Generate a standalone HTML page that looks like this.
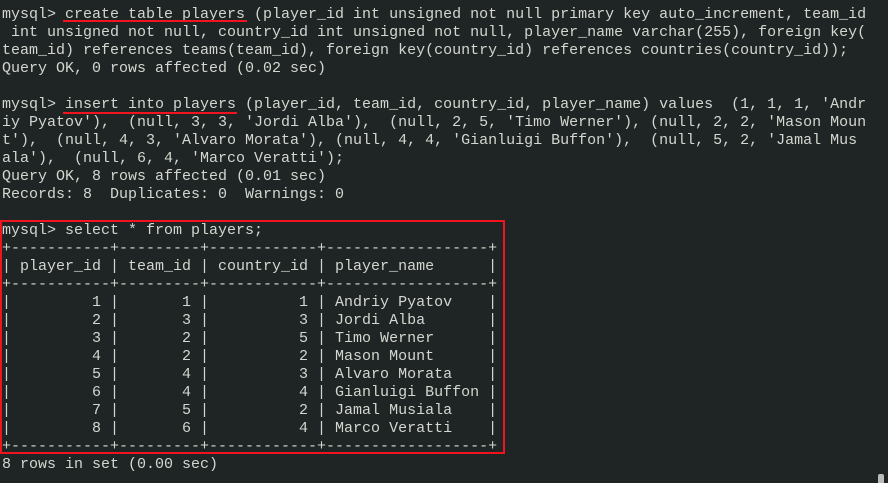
<!DOCTYPE html>
<html><head><meta charset="utf-8"><style>
html,body{margin:0;padding:0;}
body{width:888px;height:483px;background:#1f2425;overflow:hidden;position:relative;}
pre{position:absolute;left:2px;top:6px;margin:0;font-family:"Liberation Mono",monospace;font-size:15px;line-height:18px;color:#d3d7cf;white-space:pre;}
.ul{position:absolute;height:2px;background:#f0141e;}
.box{position:absolute;left:0px;top:220px;width:501px;height:230px;border:2px solid #f0141e;}
.sb{position:absolute;left:878px;top:474px;width:6px;height:9px;background:#bbb;border-radius:2px 2px 0 0;}
</style></head><body>
<pre>mysql&gt; create table players (player_id int unsigned not null primary key auto_increment, team_id
 int unsigned not null, country_id int unsigned not null, player_name varchar(255), foreign key(
team_id) references teams(team_id), foreign key(country_id) references countries(country_id));
Query OK, 0 rows affected (0.02 sec)

mysql&gt; insert into players (player_id, team_id, country_id, player_name) values  (1, 1, 1, 'Andr
iy Pyatov'),  (null, 3, 3, 'Jordi Alba'),  (null, 2, 5, 'Timo Werner'), (null, 2, 2, 'Mason Moun
t'),  (null, 4, 3, 'Alvaro Morata'), (null, 4, 4, 'Gianluigi Buffon'),  (null, 5, 2, 'Jamal Mus
ala'),  (null, 6, 4, 'Marco Veratti');
Query OK, 8 rows affected (0.01 sec)
Records: 8  Duplicates: 0  Warnings: 0

mysql&gt; select * from players;
+-----------+---------+------------+------------------+
| player_id | team_id | country_id | player_name      |
+-----------+---------+------------+------------------+
|         1 |       1 |          1 | Andriy Pyatov    |
|         2 |       3 |          3 | Jordi Alba       |
|         3 |       2 |          5 | Timo Werner      |
|         4 |       2 |          2 | Mason Mount      |
|         5 |       4 |          3 | Alvaro Morata    |
|         6 |       4 |          4 | Gianluigi Buffon |
|         7 |       5 |          2 | Jamal Musiala    |
|         8 |       6 |          4 | Marco Veratti    |
+-----------+---------+------------+------------------+
8 rows in set (0.00 sec)
</pre>
<div class="ul" style="left:63px;top:20px;width:184px;"></div>
<div class="ul" style="left:63px;top:112px;width:174px;"></div>
<div class="box"></div>
<div class="sb"></div>
</body></html>
